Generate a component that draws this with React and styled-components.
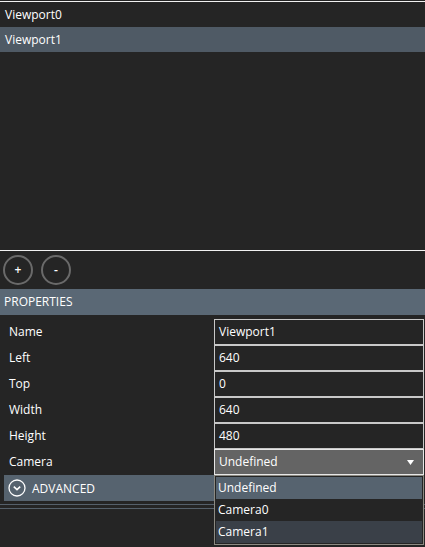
import React, {useState} from "react";
import styled, {createGlobalStyle} from "styled-components";

const GlobalStyle = createGlobalStyle`
  html, body {
    margin: 0;
    padding: 0;
    background: #252525;
  }
  body {
    font-family: "Open Sans", "Noto Sans", "Liberation Sans", sans-serif;
    font-size: 12px;
    color: #ffffff;
  }
`;

const Page = styled.div`
  width: 425px;
  height: 547px;
  display: flex;
  flex-direction: column;
  background: #252525;
  padding-top: 1px;
  box-sizing: border-box;
  overflow: hidden;
`;

const List = styled.div`
  height: 250px;
  flex-shrink: 0;
  border-top: 1px solid #f2f2f2;
  border-bottom: 1px solid #f2f2f2;
  box-sizing: border-box;
`;

const ListItem = styled.div`
  height: 25px;
  line-height: 25px;
  padding-left: 5px;
  background: ${p => (p.$selected ? "#4f5a65" : "transparent")};
`;

const ButtonBar = styled.div`
  display: flex;
  gap: 8px;
  padding: 4px 3px;
  flex-shrink: 0;
`;

const RoundButton = styled.button`
  width: 30px;
  height: 30px;
  border-radius: 50%;
  border: 2px solid #6a6a6a;
  background: transparent;
  color: #ffffff;
  font-family: inherit;
  font-size: 12px;
  font-weight: 600;
  line-height: 1;
  padding: 0;
  display: flex;
  align-items: center;
  justify-content: center;
`;

const SectionHeader = styled.div`
  height: 26px;
  line-height: 26px;
  padding-left: 4px;
  background: #5a6875;
  flex-shrink: 0;
`;

const Grid = styled.div`
  display: grid;
  grid-template-columns: 214px 210px;
  grid-auto-rows: 26px;
  margin-top: 4px;
  flex-shrink: 0;
`;

const Label = styled.div`
  padding-left: 9px;
  line-height: 26px;
`;

const Field = styled.div`
  border: 1px solid #c8c8c8;
  background: #252525;
  padding-left: 4px;
  line-height: 24px;
  box-sizing: border-box;
`;

const SelectWrap = styled.div`
  position: relative;
`;

const SelectBox = styled(Field)`
  background: #646464;
  border-color: #e6e6e6;
  display: flex;
  justify-content: space-between;
  align-items: center;
  padding-right: 9px;
  height: 26px;
`;

const Menu = styled.div`
  position: absolute;
  top: 26px;
  left: 0;
  width: 210px;
  border: 1px solid #8c8a82;
  background: #252525;
  padding: 1px;
  box-sizing: border-box;
  z-index: 2;
`;

const MenuItem = styled.div`
  height: 22px;
  line-height: 22px;
  padding-left: 2px;
  background: ${p => p.$bg || "transparent"};
`;

const Advanced = styled.div`
  margin: 0 4px;
  height: 26px;
  display: flex;
  align-items: center;
  gap: 6px;
  padding-left: 4px;
  background: #56636f;
  flex-shrink: 0;
`;

const Rule = styled.div`
  margin-top: ${p => p.$gap}px;
  border-top: 1px solid #55606b;
`;

const Chevron = () => (
  <svg width="18" height="18" viewBox="0 0 18 18">
    <circle cx="9" cy="9" r="8" fill="none" stroke="#ffffff" strokeWidth="1.3"/>
    <path d="M5.8 7.6 L9 10.6 L12.2 7.6" fill="none" stroke="#ffffff" strokeWidth="1.6"/>
  </svg>
);

const Arrow = () => (
  <svg width="7" height="5" viewBox="0 0 7 5">
    <path d="M0 0 H7 L3.5 5 Z" fill="#ffffff"/>
  </svg>
);

const props = [
  {name: "Name", value: "Viewport1"},
  {name: "Left", value: "640"},
  {name: "Top", value: "0"},
  {name: "Width", value: "640"},
  {name: "Height", value: "480"},
];

const App = () => {
  const [selected] = useState(1);
  const viewports = ["Viewport0", "Viewport1"];
  return (
    <Page>
      <GlobalStyle/>
      <List>
        {viewports.map((v, i) => (
          <ListItem key={v} $selected={i === selected}>{v}</ListItem>
        ))}
      </List>
      <ButtonBar>
        <RoundButton>+</RoundButton>
        <RoundButton>-</RoundButton>
      </ButtonBar>
      <SectionHeader>PROPERTIES</SectionHeader>
      <Grid>
        {props.map(p => (
          <React.Fragment key={p.name}>
            <Label>{p.name}</Label>
            <Field>{p.value}</Field>
          </React.Fragment>
        ))}
        <Label>Camera</Label>
        <SelectWrap>
          <SelectBox>
            <span>Undefined</span>
            <Arrow/>
          </SelectBox>
          <Menu>
            <MenuItem $bg="#56636f">Undefined</MenuItem>
            <MenuItem>Camera0</MenuItem>
            <MenuItem $bg="#3a4048">Camera1</MenuItem>
          </Menu>
        </SelectWrap>
      </Grid>
      <Advanced>
        <Chevron/>
        <span>ADVANCED</span>
      </Advanced>
      <Rule $gap={3}/>
      <Rule $gap={3}/>
    </Page>
  );
};

export default App;
